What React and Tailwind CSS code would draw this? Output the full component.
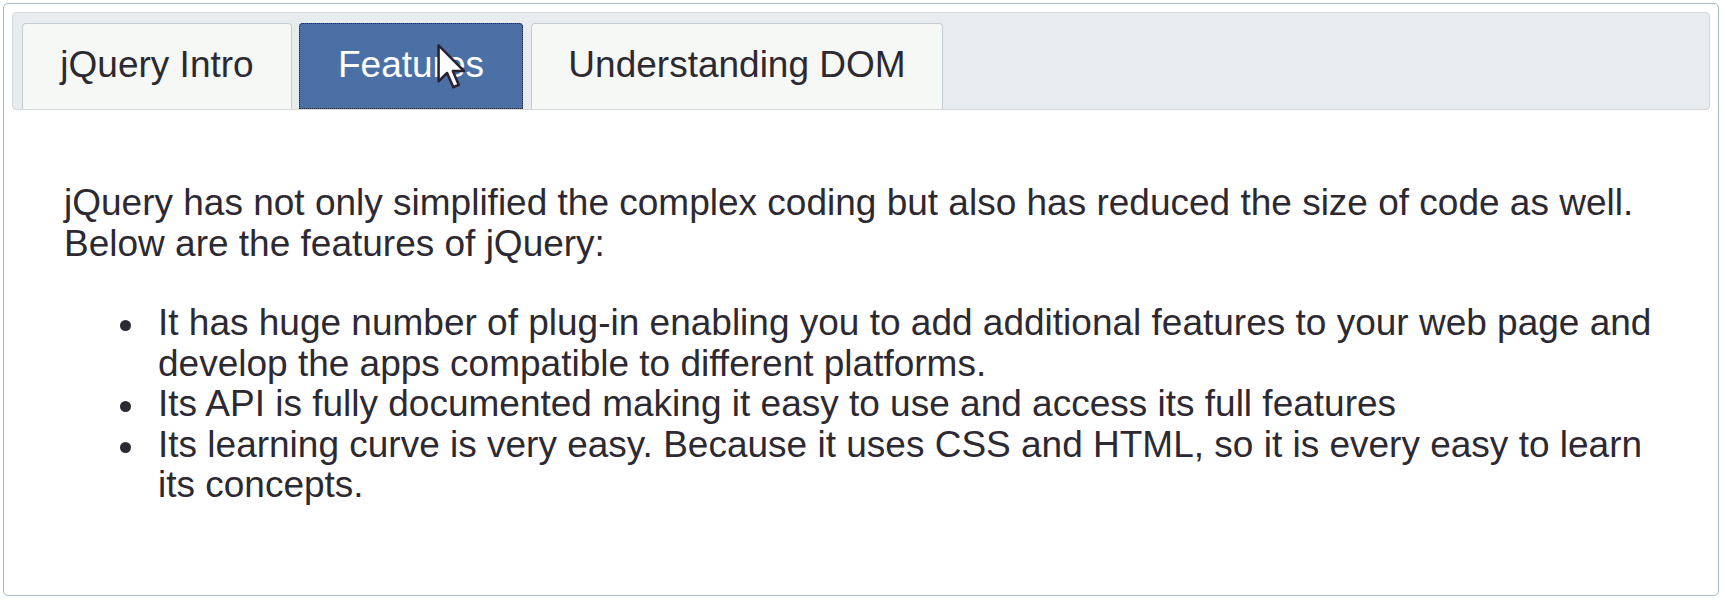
const tabs = [
  { label: "jQuery Intro", width: "w-[270px]", active: false },
  { label: "Features", width: "w-[224px] ml-[7px]", active: true },
  { label: "Understanding DOM", width: "w-[412px] ml-[8px]", active: false },
];

const bullets = [
  [
    "It has huge number of plug-in enabling you to add additional features to your web page and",
    "develop the apps compatible to different platforms.",
  ],
  ["Its API is fully documented making it easy to use and access its full features"],
  [
    "Its learning curve is very easy. Because it uses CSS and HTML, so it is every easy to learn",
    "its concepts.",
  ],
];

const Cursor = () => (
  <svg
    className="absolute left-[437px] top-[44px]"
    width="28"
    height="46"
    viewBox="0 0 12 20"
  >
    <path
      d="M0.6 0.6 L0.6 16.2 L4.3 12.6 L7 18.8 L9.4 17.8 L6.8 11.7 L11.6 11.7 Z"
      fill="#ffffff"
      stroke="#2a2230"
      strokeWidth="1.1"
      strokeLinejoin="round"
    />
  </svg>
);

const App = () => {
  return (
    <div className="relative w-[1725px] h-[601px] bg-white p-[3px] font-['Liberation_Sans',Arial,sans-serif] text-[#2d2933]">
      <div className="w-[1716px] h-[593px] border border-[#a9b8c6] rounded-[5px] p-[8px]">
        {/* Tab strip */}
        <div className="flex items-end h-[98px] pt-[10px] pl-[9px] bg-[#e9ecee] border border-[#d3d9dd] rounded-[4px]">
          {tabs.map((tab) => (
            <div
              key={tab.label}
              className={`${tab.width} h-[86px] flex items-center justify-center pb-[4px] text-[37px] leading-none rounded-t-[4px] border border-b-0 ${
                tab.active
                  ? "bg-[#4a70a6] border-[#3f6398] text-white outline-1 outline-dotted outline-[#2a2a3a] -outline-offset-1"
                  : "bg-[#f6f8f5] border-[#c4ccd3]"
              }`}
            >
              {tab.label}
            </div>
          ))}
        </div>

        {/* Panel content */}
        <div className="pl-[52px] pt-[73px] text-[37px] leading-[40.5px] whitespace-nowrap">
          <p className="mb-[39px]">
            jQuery has not only simplified the complex coding but also has reduced the size of code as well.
            <br />
            Below are the features of jQuery:
          </p>
          <ul>
            {bullets.map((lines, i) => (
              <li key={i} className="flex">
                <div className="w-[94px] shrink-0 pl-[56px]">
                  <div className="w-[11px] h-[11px] mt-[17px] rounded-full bg-[#2d2933]" />
                </div>
                <p>
                  {lines.map((line, j) => (
                    <span key={j}>
                      {j > 0 && <br />}
                      {line}
                    </span>
                  ))}
                </p>
              </li>
            ))}
          </ul>
        </div>
      </div>
      <Cursor />
    </div>
  );
};

export default App;
